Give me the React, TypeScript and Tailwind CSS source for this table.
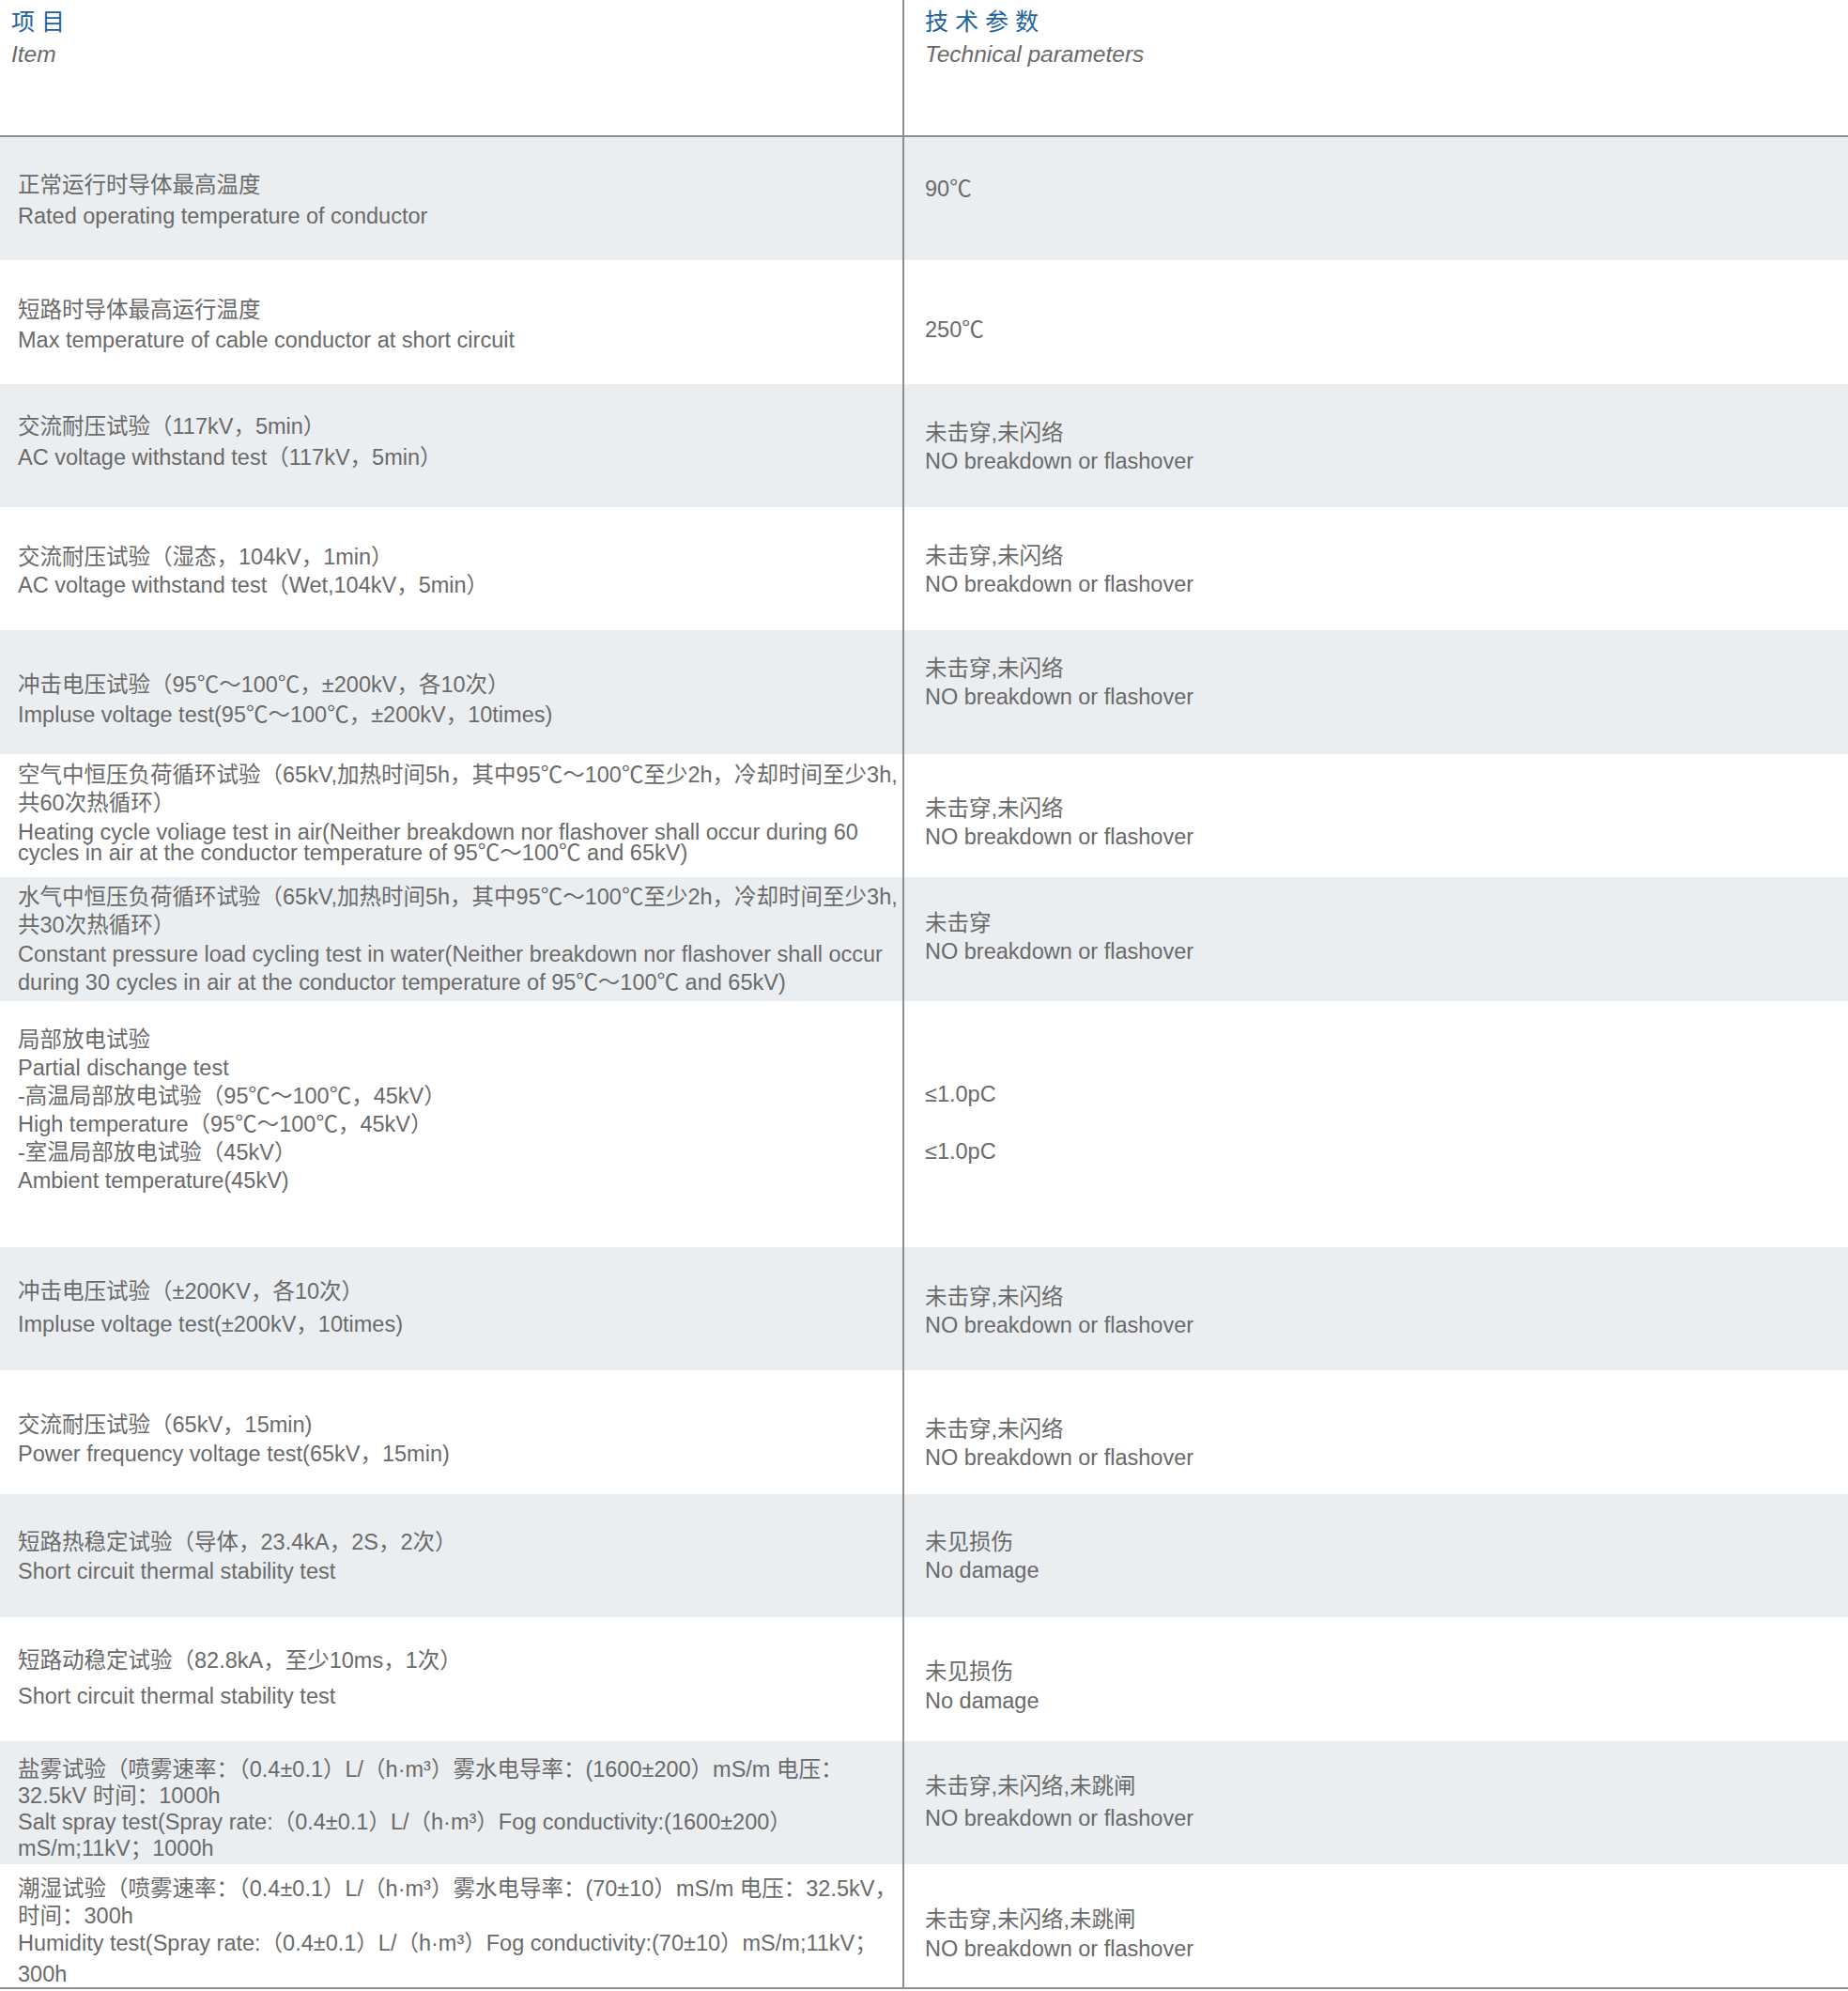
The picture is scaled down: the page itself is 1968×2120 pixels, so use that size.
import React from 'react';

type Line = string | [string, string];

interface Cell {
    pt: string;
    lh?: string;
    lines: Line[];
}

interface Row {
    h: string;
    gray: boolean;
    left: Cell;
    right: Cell;
}

const NO_BREAK = ['未击穿,未闪络', 'NO breakdown or flashover'];

const rows: Row[] = [
    {
        h: 'h-[131px]', gray: true,
        left: { pt: 'pt-[36px]', lines: ['正常运行时导体最高温度', ['Rated operating temperature of conductor', 'mt-[3px]']] },
        right: { pt: 'pt-[40px]', lines: ['90℃'] },
    },
    {
        h: 'h-[132px]', gray: false,
        left: { pt: 'pt-[38px]', lines: ['短路时导体最高运行温度', ['Max temperature of cable conductor at short circuit', 'mt-[2px]']] },
        right: { pt: 'pt-[59px]', lines: ['250℃'] },
    },
    {
        h: 'h-[131px]', gray: true,
        left: { pt: 'pt-[30px]', lines: ['交流耐压试验（117kV，5min）', ['AC voltage withstand test（117kV，5min）', 'mt-[3px]']] },
        right: { pt: 'pt-[37px]', lines: NO_BREAK },
    },
    {
        h: 'h-[131px]', gray: false,
        left: { pt: 'pt-[38px]', lines: ['交流耐压试验（湿态，104kV，1min）', 'AC voltage withstand test（Wet,104kV，5min）'] },
        right: { pt: 'pt-[37px]', lines: NO_BREAK },
    },
    {
        h: 'h-[132px]', gray: true,
        left: { pt: 'pt-[43px]', lines: ['冲击电压试验（95℃～100℃，±200kV，各10次）', ['Impluse voltage test(95℃～100℃，±200kV，10times)', 'mt-[2px]']] },
        right: { pt: 'pt-[26px]', lines: NO_BREAK },
    },
    {
        h: 'h-[131px]', gray: false,
        left: {
            pt: 'pt-[7px]',
            lines: [
                '空气中恒压负荷循环试验（65kV,加热时间5h，其中95℃～100℃至少2h，冷却时间至少3h,',
                '共60次热循环）',
                ['Heating cycle voliage test in air(Neither breakdown nor flashover shall occur during 60', 'mt-[1px]'],
                ['cycles in air at the conductor temperature of 95℃～100℃ and 65kV)', 'mt-[-8px]'],
            ],
        },
        right: { pt: 'pt-[43px]', lines: NO_BREAK },
    },
    {
        h: 'h-[132px]', gray: true,
        left: {
            pt: 'pt-[6px]',
            lines: [
                '水气中恒压负荷循环试验（65kV,加热时间5h，其中95℃～100℃至少2h，冷却时间至少3h,',
                '共30次热循环）',
                ['Constant pressure load cycling test in water(Neither breakdown nor flashover shall occur', 'mt-[1px]'],
                'during 30 cycles in air at the conductor temperature of 95℃～100℃ and 65kV)',
            ],
        },
        right: { pt: 'pt-[34px]', lines: ['未击穿', 'NO breakdown or flashover'] },
    },
    {
        h: 'h-[262px]', gray: false,
        left: {
            pt: 'pt-[26px]',
            lines: [
                '局部放电试验',
                'Partial dischange test',
                '-高温局部放电试验（95℃～100℃，45kV）',
                'High temperature（95℃～100℃，45kV）',
                '-室温局部放电试验（45kV）',
                'Ambient temperature(45kV)',
            ],
        },
        right: { pt: 'pt-[84px]', lines: ['≤1.0pC', ['≤1.0pC', 'mt-[31px]']] },
    },
    {
        h: 'h-[131px]', gray: true,
        left: { pt: 'pt-[32px]', lines: ['冲击电压试验（±200KV，各10次）', ['Impluse voltage test(±200kV，10times)', 'mt-[5px]']] },
        right: { pt: 'pt-[38px]', lines: NO_BREAK },
    },
    {
        h: 'h-[132px]', gray: false,
        left: { pt: 'pt-[43px]', lines: ['交流耐压试验（65kV，15min)', ['Power frequency voltage test(65kV，15min)', 'mt-[1px]']] },
        right: { pt: 'pt-[48px]', lines: NO_BREAK },
    },
    {
        h: 'h-[131px]', gray: true,
        left: { pt: 'pt-[36px]', lines: ['短路热稳定试验（导体，23.4kA，2S，2次）', ['Short circuit thermal stability test', 'mt-[1px]']] },
        right: { pt: 'pt-[36px]', lines: ['未见损伤', 'No damage'] },
    },
    {
        h: 'h-[132px]', gray: false,
        left: { pt: 'pt-[31px]', lines: ['短路动稳定试验（82.8kA，至少10ms，1次）', ['Short circuit thermal stability test', 'mt-[8px]']] },
        right: { pt: 'pt-[43px]', lines: ['未见损伤', ['No damage', 'mt-[1px]']] },
    },
    {
        h: 'h-[131px]', gray: true,
        left: {
            pt: 'pt-[16px]', lh: 'leading-[28px]',
            lines: [
                '盐雾试验（喷雾速率：（0.4±0.1）L/（h·m³）雾水电导率：(1600±200）mS/m 电压：',
                '32.5kV 时间：1000h',
                'Salt spray test(Spray rate:（0.4±0.1）L/（h·m³）Fog conductivity:(1600±200）',
                'mS/m;11kV；1000h',
            ],
        },
        right: { pt: 'pt-[33px]', lines: ['未击穿,未闪络,未跳闸', ['NO breakdown or flashover', 'mt-[4px]']] },
    },
    {
        h: 'h-[131px]', gray: false,
        left: {
            pt: 'pt-[12px]', lh: 'leading-[29px]',
            lines: [
                '潮湿试验（喷雾速率：（0.4±0.1）L/（h·m³）雾水电导率：(70±10）mS/m 电压：32.5kV，',
                '时间：300h',
                'Humidity test(Spray rate:（0.4±0.1）L/（h·m³）Fog conductivity:(70±10）mS/m;11kV；',
                ['300h', 'mt-[4px]'],
            ],
        },
        right: { pt: 'pt-[44px]', lines: ['未击穿,未闪络,未跳闸', ['NO breakdown or flashover', 'mt-[1px]']] },
    },
];

const CellText: React.FC<{ cell: Cell }> = ({ cell }) => (
    <div className={`${cell.pt} ${cell.lh ?? 'leading-[30px]'}`}>
        {cell.lines.map((line, i) => {
            const [text, extra] = typeof line === 'string' ? [line, ''] : line;
            return (
                <div key={i} className={`whitespace-nowrap ${extra}`}>
                    {text}
                </div>
            );
        })}
    </div>
);

export default function App() {
    return (
        <div className="w-[1968px] min-h-[2120px] bg-white font-['Liberation_Sans','Noto_Sans_CJK_SC',sans-serif] text-[23.5px] text-[#6a6a6a]">
            <div className="border-b-2 border-[#8e8e8e]">
                {/* Header */}
                <div className="flex h-[146px] border-b-2 border-[#8e8e8e]">
                    <div className="w-[963px] shrink-0 border-r-2 border-[#8e8e8e] pl-[12px] pt-[8px]">
                        <div className="leading-[30px] text-[25px] tracking-[7px] text-[#1d62a0]">项目</div>
                        <div className="mt-[5px] leading-[30px] text-[24.5px] italic text-[#6a6a6a]">Item</div>
                    </div>
                    <div className="flex-1 pl-[22px] pt-[8px]">
                        <div className="leading-[30px] text-[25px] tracking-[7px] text-[#1d62a0]">技术参数</div>
                        <div className="mt-[5px] leading-[30px] text-[24.5px] italic text-[#6a6a6a]">Technical parameters</div>
                    </div>
                </div>

                {/* Rows */}
                {rows.map((row, i) => (
                    <div key={i} className={`flex ${row.h} ${row.gray ? 'bg-[#eaeef1]' : 'bg-white'}`}>
                        <div className="w-[963px] shrink-0 border-r-2 border-[#8e8e8e] pl-[19px]">
                            <CellText cell={row.left} />
                        </div>
                        <div className="flex-1 pl-[22px]">
                            <CellText cell={row.right} />
                        </div>
                    </div>
                ))}
            </div>
        </div>
    );
}
